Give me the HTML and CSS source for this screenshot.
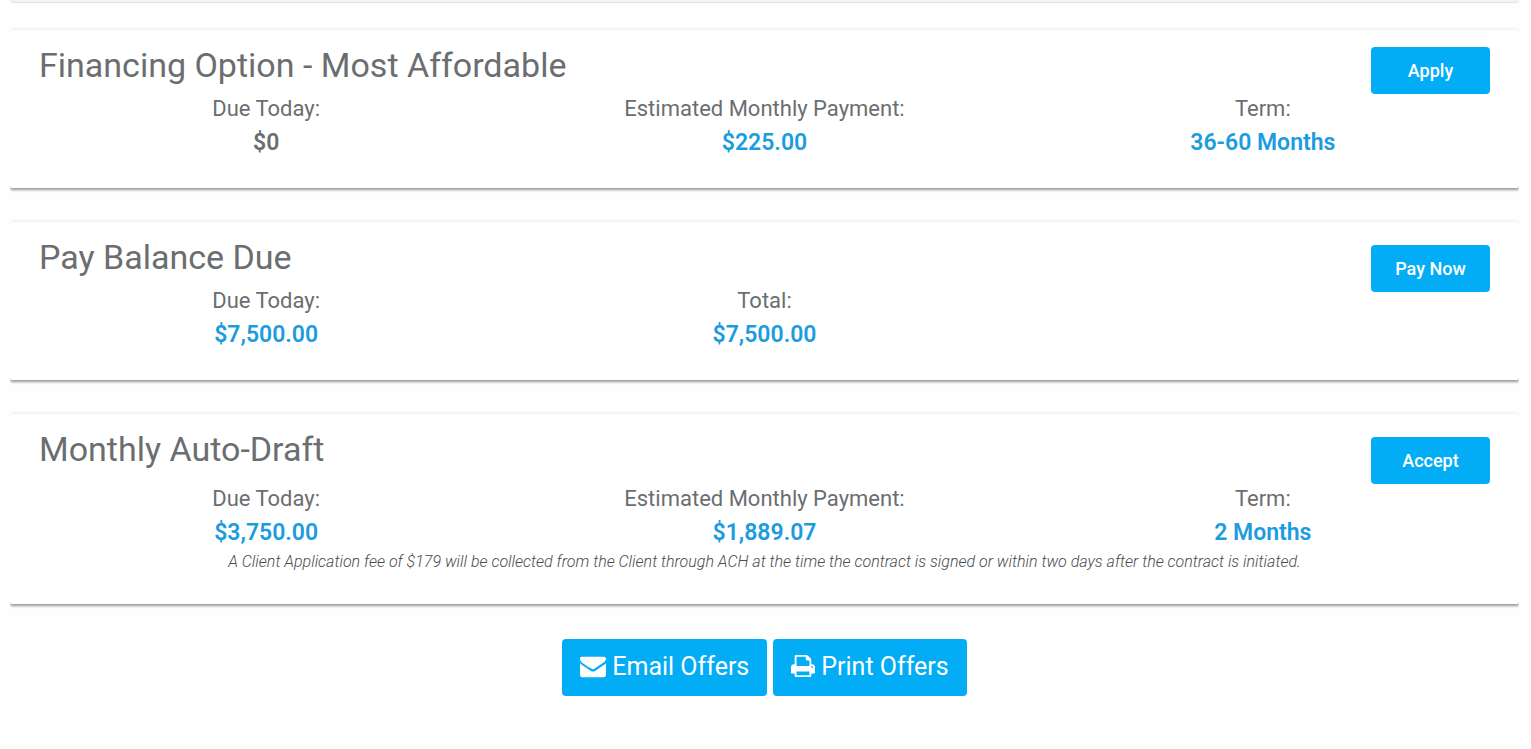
FILE: index.html
```html
<!DOCTYPE html>
<html lang="en">
<head>
    <meta charset="UTF-8">
    <meta name="viewport" content="width=device-width, initial-scale=1.0">
    <title>Payment Offers</title>
    <link rel="stylesheet" href="styles.css">
</head>
<body>
    <div class="panel-edge"></div>
    <main class="offers">
        <section class="card">
            <div class="card-header">
                <h2>Financing Option - Most Affordable</h2>
                <button type="button" class="btn">Apply</button>
            </div>
            <dl class="terms">
                <div>
                    <dt>Due Today:</dt>
                    <dd class="plain">$0</dd>
                </div>
                <div>
                    <dt>Estimated Monthly Payment:</dt>
                    <dd>$225.00</dd>
                </div>
                <div>
                    <dt>Term:</dt>
                    <dd>36-60 Months</dd>
                </div>
            </dl>
        </section>

        <section class="card">
            <div class="card-header">
                <h2>Pay Balance Due</h2>
                <button type="button" class="btn btn-low">Pay Now</button>
            </div>
            <dl class="terms">
                <div>
                    <dt>Due Today:</dt>
                    <dd>$7,500.00</dd>
                </div>
                <div>
                    <dt>Total:</dt>
                    <dd>$7,500.00</dd>
                </div>
            </dl>
        </section>

        <section class="card">
            <div class="card-header">
                <h2>Monthly Auto-Draft</h2>
                <button type="button" class="btn btn-low">Accept</button>
            </div>
            <dl class="terms terms-spaced">
                <div>
                    <dt>Due Today:</dt>
                    <dd>$3,750.00</dd>
                </div>
                <div>
                    <dt>Estimated Monthly Payment:</dt>
                    <dd>$1,889.07</dd>
                </div>
                <div>
                    <dt>Term:</dt>
                    <dd>2 Months</dd>
                </div>
            </dl>
            <p class="note">A Client Application fee of $179 will be collected from the Client through ACH at the time the contract is signed or within two days after the contract is initiated.</p>
        </section>
    </main>

    <div class="actions">
        <button type="button" class="btn-lg">
            <svg width="26" height="26" viewBox="0 0 1792 1792" fill="currentColor" aria-hidden="true"><path d="M1792 710v794q0 66-47 113t-113 47H160q-66 0-113-47T0 1504V710q44 49 101 87 362 246 497 345 57 42 92.500 65.500t94.500 48 110 24.500h2q51 0 110-24.500t94.500-48T1194 1142q170-123 498-345 57-39 100-87zm0-334q0 79-49 151t-122 123q-376 261-468 325-10 7-42.500 30.500t-54 38-52 32.500-57.500 27-50 9h-2q-23 0-50-9t-57.500-27-52-32.500-54-38T639 1015q-91-64-262-182.500T172 690q-62-42-117-115.500T0 388q0-78 41.500-105T160 256h1472q65 0 112.500 30t47.500 90z"/></svg>
            Email Offers
        </button>
        <button type="button" class="btn-lg">
            <svg width="24" height="26" viewBox="0 0 1664 1792" fill="currentColor" aria-hidden="true"><path d="M384 1536h896v-256H384v256zm0-640h896V512h-160q-40 0-68-28t-28-68V256H384v640zm1152 64q0-26-19-45t-45-19-45 19-19 45 19 45 45 19 45-19 19-45zm128 0v416q0 13-9.500 22.500t-22.500 9.500h-224v160q0 40-28 68t-68 28H352q-40 0-68-28t-28-68v-160H32q-13 0-22.500-9.500T0 1376V960q0-79 56.500-135.500T192 768h64V224q0-40 28-68t68-28h672q40 0 88 20t76 48l152 152q28 28 48 76t20 88v256h64q79 0 135.500 56.500T1664 960z"/></svg>
            Print Offers
        </button>
    </div>
</body>
</html>
```
FILE: styles.css
```css
body {
    margin: 0 12px 0 10px;
    background-color: #fefefe;
    color: #6b6e71;
    font-family: Roboto, Arial, sans-serif;
}
button {
    border: 0;
    border-radius: 4px;
    background-color: #03adf5;
    color: #fff;
    font-family: inherit;
    cursor: pointer;
}
/* bottom edge of the panel above the offers */
.panel-edge {
    height: 2px;
    background-color: #f3f3f3;
    border-bottom: 1px solid #e2e2e2;
    border-radius: 0 0 4px 4px;
}
.offers {
    display: flex;
    flex-direction: column;
    gap: 34px;
    margin-top: 27px;
}
.card {
    padding: 17px 7px 28px;
    background-color: #fff;
    border-radius: 2px;
    box-shadow: 0 2px 3px rgba(0, 0, 0, 0.38), 0 0 4px rgba(0, 0, 0, 0.1);
}
.card-header {
    display: flex;
    justify-content: space-between;
    align-items: flex-start;
    height: 45px;
    padding: 0 22px;
}
h2 {
    margin: 0;
    font-size: 34px;
    font-weight: 400;
    line-height: 36px;
}
.btn {
    width: 119px;
    height: 47px;
    font-size: 18px;
    font-weight: 500;
}
.btn-low {
    margin-top: 6px;
}
.terms {
    display: grid;
    grid-template-columns: repeat(3, 1fr);
    margin: 0;
    font-size: 22px;
    line-height: 34px;
    text-align: center;
}
.terms-spaced {
    margin-top: 6px;
}
dd {
    margin: 0;
    color: #1c9ce0;
    font-size: 23px;
    font-weight: 600;
}
dd.plain {
    color: #6b6e71;
}
.note {
    margin: 0;
    padding-bottom: 2px;
    font-size: 16px;
    font-style: italic;
    font-weight: 300;
    line-height: 24px;
    text-align: center;
    color: #4a4c4e;
}
.actions {
    display: flex;
    justify-content: center;
    gap: 6px;
    margin-top: 35px;
}
.btn-lg {
    display: flex;
    align-items: center;
    gap: 6px;
    height: 57px;
    padding: 0 18px 3px;
    font-size: 25px;
}
```
